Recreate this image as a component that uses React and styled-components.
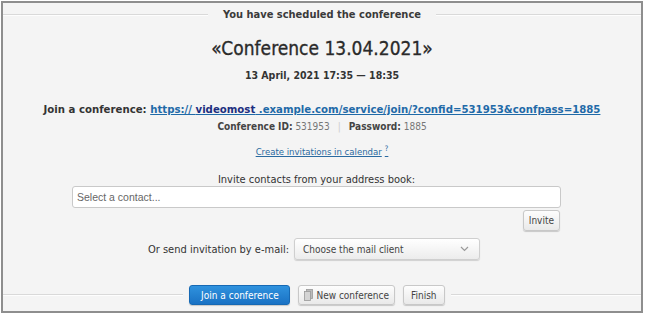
import React from 'react';
import styled, { createGlobalStyle } from 'styled-components';

const GlobalStyle = createGlobalStyle`
    body {
        margin: 0;
        background: #fff;
        font-family: "DejaVu Sans Condensed", "DejaVu Sans", sans-serif;
    }
`

const Frame = styled.div`
    box-sizing: border-box;
    width: 642px;
    height: 312px;
    margin: 1px 0 0 1px;
    border: 2px solid #8e8e8e;
    background: #f4f4f4;
    display: flex;
    flex-direction: column;
    color: #333;
`

const Rule = styled.div`
    display: flex;
    align-items: center;
    gap: ${p => p.$gap || 13}px;
    margin-top: ${p => p.$top || 0}px;
`

const Line = styled.div`
    flex: ${p => p.$grow || 1};
    height: 0;
    border-top: 1px solid #d9d9d9;
    border-bottom: 1px solid #fdfdfd;
`

const Legend = styled.div`
    font-size: 11px;
    font-weight: bold;
    color: #3a3a3a;
`

const Body = styled.div`
    display: flex;
    flex-direction: column;
    align-items: center;
    text-align: center;
`

const Title = styled.h1`
    margin: 16px 0 0;
    font-size: 19px;
    font-weight: normal;
    color: #2a2a2a;
    -webkit-text-stroke: 0.3px #2a2a2a;
`

const When = styled.div`
    margin-top: 10px;
    font-size: 10.5px;
    font-weight: bold;
    color: #333;
`

const JoinLine = styled.div`
    margin-top: 22px;
    font-size: 11.3px;
    font-weight: bold;
    color: #333;

    a {
        color: #1f6aa8;
    }

    b {
        color: #1d2f80;
    }
`

const Credentials = styled.div`
    margin-top: 5px;
    font-size: 10px;
    color: #777;

    strong {
        color: #444;
    }
`

const Sep = styled.span`
    color: #ccc;
    margin: 0 8px;
`

const CalendarLink = styled.a`
    margin-top: 12px;
    font-size: 9.5px;
    color: #2a6aa0;

    sup {
        font-size: 7.5px;
        margin-left: 3px;
    }
`

const Label = styled.div`
    font-size: 11px;
    color: #333;
`

const InviteBlock = styled.div`
    margin-top: 16px;
    width: 489px;
    margin-left: -11px;
    display: flex;
    flex-direction: column;
    align-items: center;
`

const ContactInput = styled.input`
    box-sizing: border-box;
    width: 100%;
    height: 22px;
    margin-top: 0;
    padding: 0 4px;
    border: 1px solid #c9c9c9;
    border-radius: 3px;
    background: #fff;
    font-family: "Liberation Sans", Arial, sans-serif;
    font-size: 10.5px;
    outline: none;

    &::placeholder {
        color: #666;
    }
`

const Button = styled.button`
    box-sizing: border-box;
    height: ${p => p.$h || 20}px;
    padding: 0 ${p => p.$pad || 8}px;
    border: 1px solid ${p => p.$primary ? '#1669b4' : '#c8c8c8'};
    border-radius: 3px;
    background: ${p => p.$primary
        ? 'linear-gradient(#2f92de, #1a72c4)'
        : 'linear-gradient(#fdfdfd, #e9e9e9)'};
    box-shadow: 0 1px 1px rgba(0, 0, 0, 0.18);
    color: ${p => p.$primary ? '#fff' : '#444'};
    font-family: "DejaVu Sans Condensed", sans-serif;
    font-size: 10px;
    display: inline-flex;
    align-items: center;
    justify-content: center;
    gap: 3px;
`

const InviteRow = styled.div`
    align-self: flex-end;
    margin-top: 1px;
    margin-right: 1px;
`

const MailRow = styled.div`
    margin-top: 7px;
    display: flex;
    align-items: center;
    gap: 5px;
    margin-left: -16px;
`

const Select = styled.div`
    box-sizing: border-box;
    width: 186px;
    height: 22px;
    padding: 0 10px 0 8px;
    border: 1px solid #cfcfcf;
    border-radius: 3px;
    background: linear-gradient(#ffffff, #ececec);
    box-shadow: 0 1px 1px rgba(0, 0, 0, 0.15);
    display: flex;
    align-items: center;
    justify-content: space-between;
    font-size: 10px;
    color: #444;
`

const Footer = styled(Rule)`
    margin-top: auto;
    margin-bottom: 6px;
`

const Buttons = styled.div`
    display: flex;
    gap: 8px;
`

const Chevron = () => (
    <svg width="9" height="6" viewBox="0 0 9 6">
        <path d="M1 1l3.5 3.5L8 1" fill="none" stroke="#9a9a9a" strokeWidth="1.2" />
    </svg>
)

const CopyIcon = () => (
    <svg width="9" height="12" viewBox="0 0 9 12">
        <rect x="2.5" y="0.5" width="6" height="9" fill="#bbb" stroke="#999" strokeWidth="0.8" />
        <rect x="0.5" y="2.5" width="6" height="9" fill="#d4d4d4" stroke="#999" strokeWidth="0.8" />
    </svg>
)

export default function App() {
    return (
        <>
            <GlobalStyle />
            <Frame>
                <Rule $top={5} $gap={15}>
                    <Line />
                    <Legend>You have scheduled the conference</Legend>
                    <Line />
                </Rule>
                <Body>
                    <Title>«Conference 13.04.2021»</Title>
                    <When>13 April, 2021 17:35 — 18:35</When>
                    <JoinLine>
                        Join a conference:{' '}
                        <a href="#">https:// <b>videomost</b> .example.com/service/join/?confid=531953&amp;confpass=1885</a>
                    </JoinLine>
                    <Credentials>
                        <strong>Conference ID:</strong> 531953<Sep>|</Sep><strong>Password:</strong> 1885
                    </Credentials>
                    <CalendarLink href="#">Create invitations in calendar<sup>?</sup></CalendarLink>
                    <InviteBlock>
                        <Label>Invite contacts from your address book:</Label>
                        <ContactInput placeholder="Select a contact..." />
                        <InviteRow>
                            <Button $h={21} $pad={5}>Invite</Button>
                        </InviteRow>
                    </InviteBlock>
                    <MailRow>
                        <Label>Or send invitation by e-mail:</Label>
                        <Select>
                            <span>Choose the mail client</span>
                            <Chevron />
                        </Select>
                    </MailRow>
                </Body>
                <Footer $gap={6}>
                    <Line $grow={180} />
                    <Buttons>
                        <Button $primary style={{ width: 101 }}>Join a conference</Button>
                        <Button $pad={5}><CopyIcon />New conference</Button>
                        <Button $pad={7}>Finish</Button>
                    </Buttons>
                    <Line $grow={190} />
                </Footer>
            </Frame>
        </>
    );
}
